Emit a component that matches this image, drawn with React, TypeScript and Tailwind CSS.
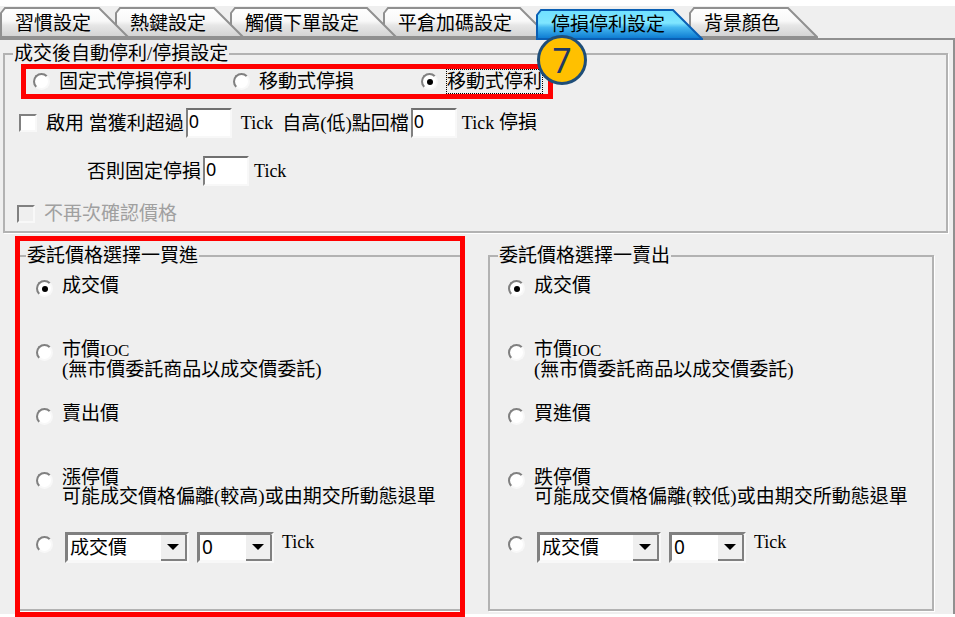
import { useState } from "react";

type Tab = { id: string; label: string; layer: string };

type PriceOption = { id: string; title: string; latin?: string; note?: string };

const TABS: Tab[] = [
  { id: "habit", label: "習慣設定", layer: "z-[6]" },
  { id: "hotkey", label: "熱鍵設定", layer: "z-[5]" },
  { id: "trigger", label: "觸價下單設定", layer: "z-[4]" },
  { id: "close", label: "平倉加碼設定", layer: "z-[3]" },
  { id: "stop", label: "停損停利設定", layer: "z-[2]" },
  { id: "color", label: "背景顏色", layer: "z-[1]" },
];

const MODES = ["固定式停損停利", "移動式停損", "移動式停利"];

const BUY_OPTIONS: PriceOption[] = [
  { id: "deal", title: "成交價" },
  { id: "market", title: "市價", latin: "IOC", note: "(無市價委託商品以成交價委託)" },
  { id: "ask", title: "賣出價" },
  { id: "limit", title: "漲停價", note: "可能成交價格偏離(較高)或由期交所動態退單" },
];

const SELL_OPTIONS: PriceOption[] = [
  { id: "deal", title: "成交價" },
  { id: "market", title: "市價", latin: "IOC", note: "(無市價委託商品以成交價委託)" },
  { id: "bid", title: "買進價" },
  { id: "limit", title: "跌停價", note: "可能成交價格偏離(較低)或由期交所動態退單" },
];

const radioClass =
  "grid size-[17px] shrink-0 appearance-none place-items-center rounded-full border-2 border-t-[#808080] border-l-[#808080] border-r-[#f8f8f8] border-b-[#f8f8f8] bg-white outline-none before:size-[6px] before:rounded-full before:content-[''] checked:before:bg-black";

const checkboxClass =
  "size-[18px] shrink-0 appearance-none border-2 border-t-[#808080] border-l-[#808080] border-r-[#f8f8f8] border-b-[#f8f8f8] bg-white outline-none checked:bg-[#404040] disabled:bg-[#efefef]";

const fieldsetClass = "min-w-0 border-2 border-[#b2b2b2] shadow-[1px_1px_0_#fff]";

function Tick() {
  return <span className="text-[18px]">Tick</span>;
}

function TabButton({ tab, active, onClick }: { tab: Tab; active: boolean; onClick: () => void }) {
  const w = tab.label.length * 19 + 53;
  const top = active ? 4 : 2;
  const bottom = active ? 33 : 31;
  return (
    <button
      type="button"
      role="tab"
      aria-selected={active}
      onClick={onClick}
      className={`relative -mr-[14px] h-[34px] pr-[38px] pl-[15px] text-left whitespace-nowrap ${active ? "z-10 pt-[3px]" : tab.layer}`}
    >
      <svg className="absolute inset-0 size-full" viewBox={`0 0 ${w} 34`} aria-hidden="true">
        <defs>
          <linearGradient id={`fill-${tab.id}`} x1="0" y1="0" x2="0" y2="1">
            <stop offset="0" stopColor={active ? "#6fe0ff" : "#ffffff"} />
            <stop offset="0.45" stopColor={active ? "#7fe6ff" : "#f8f8f8"} />
            <stop offset="0.6" stopColor={active ? "#45b8f0" : "#e6e6e6"} />
            <stop offset="1" stopColor={active ? "#0a78d0" : "#d2d2d2"} />
          </linearGradient>
        </defs>
        <path
          d={`M1 ${bottom} V${top + 5} L5 ${top} H${w - 30} L${w - 1} ${bottom} Z`}
          fill={`url(#fill-${tab.id})`}
          stroke={active ? "#0a5fb4" : "#909090"}
          strokeWidth="2"
        />
      </svg>
      <span className="relative">{tab.label}</span>
    </button>
  );
}

function NumberBox({ id, label }: { id: string; label: string }) {
  return (
    <input
      id={id}
      type="text"
      aria-label={label}
      defaultValue="0"
      className="h-[30px] w-[46px] border-2 border-t-[#707070] border-l-[#808080] border-r-[#f8f8f8] border-b-[#f8f8f8] bg-white pb-1 pl-px font-['Noto_Sans'] text-[18px] outline-none"
    />
  );
}

function DropDown({ label, options, width }: { label: string; options: string[]; width: string }) {
  return (
    <div className={`relative h-[31px] ${width}`}>
      <select
        aria-label={label}
        className="size-full appearance-none border-3 border-t-[#808080] border-l-[#808080] border-r-[#f8f8f8] border-b-[#f8f8f8] bg-white pl-[2px] font-['Noto_Sans','Noto_Sans_CJK_TC',sans-serif] text-[19px] outline-none"
      >
        {options.map((o) => (
          <option key={o}>{o}</option>
        ))}
      </select>
      <span className="pointer-events-none absolute top-[3px] right-[2px] bottom-[2px] grid w-[26px] place-items-center border-r-2 border-b-2 border-[#808080] bg-[#efefef]">
        <svg width="12" height="6" viewBox="0 0 12 6" aria-hidden="true">
          <path d="M0 0H12L6 6Z" fill="#000" />
        </svg>
      </span>
    </div>
  );
}

function PriceGroup({ name, legend, options }: { name: string; legend: string; options: PriceOption[] }) {
  return (
    <fieldset className={`${fieldsetClass} pt-[11px] pb-[46px] pl-[18px]`}>
      <legend className="-ml-[10px] px-px">{legend}</legend>
      {options.map((o, i) => (
        <label key={o.id} className="flex h-16 items-start gap-[9px] whitespace-nowrap">
          <input type="radio" name={name} defaultChecked={i === 0} className={`${radioClass} mt-1`} />
          <span>
            {o.title}
            {o.latin && <span className="text-[17px]">{o.latin}</span>}
            {o.note && <span className="block">{o.note}</span>}
          </span>
        </label>
      ))}
      <div className="flex items-start">
        <input type="radio" name={name} aria-label="自訂價格" className={`${radioClass} mt-1 mr-3`} />
        <DropDown label="價格" options={["成交價"]} width="w-[124px]" />
        <div className="ml-2">
          <DropDown label="檔數" options={["0", "1", "2", "3"]} width="w-[77px]" />
        </div>
        <span className="ml-2">
          <Tick />
        </span>
      </div>
    </fieldset>
  );
}

export default function App() {
  const [activeTab, setActiveTab] = useState("stop");
  const [mode, setMode] = useState(2);

  return (
    <div className="min-h-screen bg-white pt-[6px] pb-[3px] font-['Liberation_Serif','Noto_Sans_CJK_TC',sans-serif] text-[19px] leading-[19px] text-black">
      <div className="bg-[#efefef]">
        <div role="tablist" className="relative flex h-[34px] border-b-2 border-[#909090]">
          {TABS.map((tab) => (
            <TabButton key={tab.id} tab={tab} active={tab.id === activeTab} onClick={() => setActiveTab(tab.id)} />
          ))}
        </div>

        <main className="border-r-2 border-[#909090] pt-1 pb-[3px]">
          <fieldset className={`${fieldsetClass} mr-[5px] ml-[3px] pb-2`}>
            <legend className="ml-2 px-px">成交後自動停利/停損設定</legend>

            <div className="relative mt-px ml-4 grid h-[35px] w-fit grid-cols-[200px_188px_auto] items-center border-5 border-[#ff0000] pr-[6px] pl-[7px] whitespace-nowrap">
              {MODES.map((m, i) => (
                <label key={m} className="flex items-center gap-[9px]">
                  <input
                    type="radio"
                    name="mode"
                    checked={mode === i}
                    onChange={() => setMode(i)}
                    className={radioClass}
                  />
                  <span className={mode === i ? "py-[2px] outline-1 outline-dotted outline-black" : ""}>{m}</span>
                </label>
              ))}
              <span className="absolute -top-[34px] -right-[39px] z-20 grid size-[50px] place-items-center rounded-full border-3 border-[#1f4e79] bg-[#ffc000] font-['Noto_Sans'] text-[34px] leading-[34px] text-[#1f3864]">
                7
              </span>
            </div>

            <div className="mt-[9px] flex items-center pl-[14px] whitespace-nowrap">
              <input id="enable" type="checkbox" className={checkboxClass} />
              <label htmlFor="enable" className="mr-[2px] ml-[9px]">
                啟用 當獲利超過
              </label>
              <NumberBox id="profit" label="當獲利超過" />
              <span className="mr-[9px] ml-[9px]">
                <Tick />
              </span>
              <label htmlFor="pullback" className="mr-[2px]">
                自高(低)點回檔
              </label>
              <NumberBox id="pullback" label="自高(低)點回檔" />
              <span className="ml-[5px]">
                <Tick /> 停損
              </span>
            </div>

            <div className="mt-[18px] flex items-center pl-[82px] whitespace-nowrap">
              <label htmlFor="fixed" className="mr-[2px]">
                否則固定停損
              </label>
              <NumberBox id="fixed" label="否則固定停損" />
              <span className="ml-[5px]">
                <Tick />
              </span>
            </div>

            <label className="mt-[18px] flex items-center gap-[9px] pl-3 text-[#a0a0a0]">
              <input type="checkbox" disabled className={checkboxClass} />
              不再次確認價格
            </label>
          </fieldset>

          <div className="mt-[13px] mr-[19px] ml-4 grid grid-cols-2 gap-[26px]">
            <div className="relative">
              <PriceGroup name="buy" legend="委託價格選擇一買進" options={BUY_OPTIONS} />
              <div className="pointer-events-none absolute -top-[10px] -right-[3px] -bottom-[6px] -left-px border-5 border-[#ff0000]" />
            </div>
            <PriceGroup name="sell" legend="委託價格選擇一賣出" options={SELL_OPTIONS} />
          </div>
        </main>
      </div>
    </div>
  );
}
